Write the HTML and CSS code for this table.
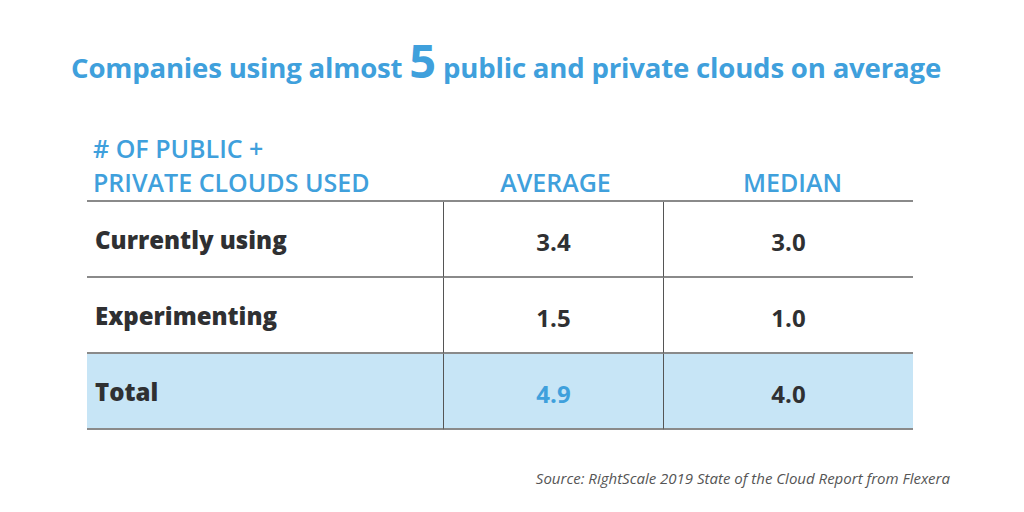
FILE: index.html
```html
<!DOCTYPE html>
<html lang="en">
<head>
<meta charset="utf-8">
<title>Clouds on average</title>
<link rel="stylesheet" href="styles.css">
</head>
<body>
<main class="page">
  <h1 class="title">Companies using almost <span class="big">5</span> public and private clouds on average</h1>
  <div class="table">
    <div class="cell head first"># OF PUBLIC +<br>PRIVATE CLOUDS USED</div>
    <div class="cell head num">AVERAGE</div>
    <div class="cell head num">MEDIAN</div>

    <div class="cell label">Currently using</div>
    <div class="cell num val mid">3.4</div>
    <div class="cell num val">3.0</div>

    <div class="cell label">Experimenting</div>
    <div class="cell num val mid">1.5</div>
    <div class="cell num val">1.0</div>

    <div class="cell label total">Total</div>
    <div class="cell num val mid total accent">4.9</div>
    <div class="cell num val total">4.0</div>
  </div>
  <p class="source">Source: RightScale 2019 State of the Cloud Report from Flexera</p>
</main>
</body>
</html>
```
FILE: styles.css
```css
* { box-sizing: border-box; }
html, body { margin: 0; padding: 0; background: #fff; }
body { font-family: "Open Sans", "Liberation Sans", sans-serif; }

.page {
  width: 1024px;
  height: 512px;
  display: flex;
  flex-direction: column;
  padding: 0 0 0 87px;
}

.title {
  margin: 38px 0 0 -16px;
  font-size: 27.6px;
  line-height: 44px;
  font-weight: 700;
  color: #3fa0dc;
  white-space: nowrap;
  letter-spacing: -0.2px;
}
.title .big {
  font-size: 47px;
  line-height: 44px;
}

.table {
  margin-top: 35px;
  width: 826px;
  display: grid;
  grid-template-columns: 356px 221px 249px;
  grid-auto-rows: 76px;
  grid-template-rows: 78px;
}

.cell {
  display: flex;
  align-items: center;
  border-bottom: 2px solid #8a8a8a;
  color: #2f3032;
  font-weight: 800;
  font-size: 24px;
}

.head {
  align-items: flex-end;
  color: #3fa0dc;
  font-weight: 600;
  font-size: 25px;
  line-height: 34px;
  padding-bottom: 1px;
  border-bottom-color: #8a8a8a;
}
.head.first { padding-left: 6px; }

.num { justify-content: center; }
.head.num:nth-child(2) { padding-left: 4px; }
.head.num:nth-child(3) { padding-left: 8px; }

.label { padding-left: 8px; }
.mid { border-left: 1.5px solid #555; border-right: 1.5px solid #555; }
.val { padding-top: 4px; font-weight: 700; }
.label { padding-top: 1px; }

.total { background: #c7e5f6; }
.accent { color: #3fa0dc; }

.source {
  margin: 38px 74px 0 0;
  align-self: flex-end;
  font-style: italic;
  font-size: 15px;
  color: #555;
}
```
